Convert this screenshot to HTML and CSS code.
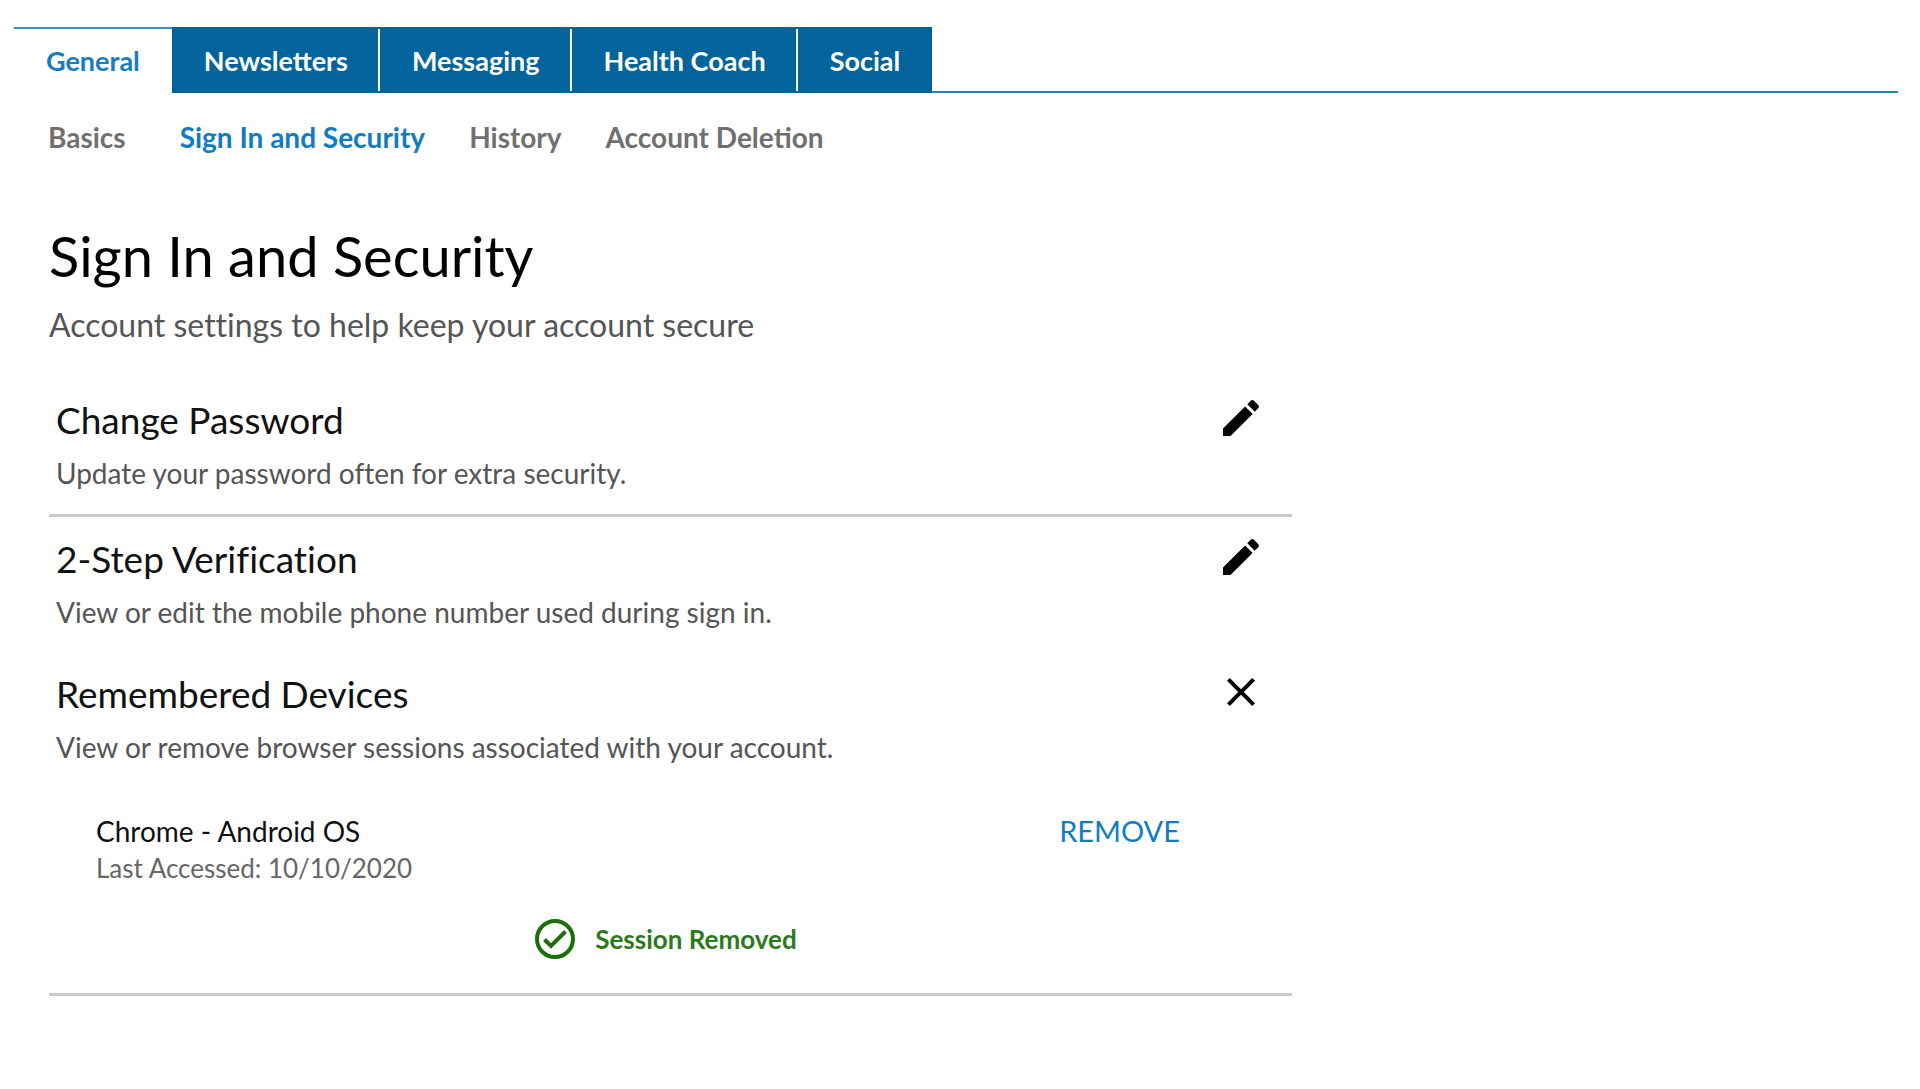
FILE: index.html
```html
<!DOCTYPE html>
<html lang="en">
<head>
<meta charset="utf-8">
<meta name="viewport" content="width=device-width, initial-scale=1">
<title>Sign In and Security</title>
<link rel="stylesheet" href="styles.css">
</head>
<body>
<nav class="tabs" aria-label="Account sections">
  <a class="tab tab-active" href="#general" aria-current="page">General</a>
  <a class="tab" href="#newsletters">Newsletters</a>
  <a class="tab" href="#messaging">Messaging</a>
  <a class="tab" href="#coach">Health Coach</a>
  <a class="tab" href="#social">Social</a>
  <span class="tabs-rest"></span>
</nav>
<nav class="subnav" aria-label="General settings">
  <a class="sublink sublink-first" href="#basics">Basics</a>
  <a class="sublink sublink-active" href="#security" aria-current="page">Sign In and Security</a>
  <a class="sublink" href="#history">History</a>
  <a class="sublink" href="#deletion">Account Deletion</a>
</nav>
<main class="content">
  <h1 class="title">Sign In and Security</h1>
  <p class="subtitle">Account settings to help keep your account secure</p>

  <section class="group">
    <div class="setting">
      <div class="setting-text">
        <h2 class="setting-title">Change Password</h2>
        <p class="setting-desc">Update your password often for extra security.</p>
      </div>
      <button class="icon-button" type="button" aria-label="Edit password">
        <svg class="icon" viewBox="0 0 24 24"><path d="M3 17.25V21h3.75L17.81 9.94l-3.75-3.75L3 17.25zM20.71 7.04a1 1 0 0 0 0-1.41l-2.34-2.34a1 1 0 0 0-1.41 0l-1.83 1.83 3.75 3.75 1.83-1.83z"/></svg>
      </button>
    </div>
  </section>

  <section class="group">
    <div class="setting">
      <div class="setting-text">
        <h2 class="setting-title">2-Step Verification</h2>
        <p class="setting-desc">View or edit the mobile phone number used during sign in.</p>
      </div>
      <button class="icon-button" type="button" aria-label="Edit 2-step verification">
        <svg class="icon" viewBox="0 0 24 24"><path d="M3 17.25V21h3.75L17.81 9.94l-3.75-3.75L3 17.25zM20.71 7.04a1 1 0 0 0 0-1.41l-2.34-2.34a1 1 0 0 0-1.41 0l-1.83 1.83 3.75 3.75 1.83-1.83z"/></svg>
      </button>
    </div>
    <div class="setting">
      <div class="setting-text">
        <h2 class="setting-title">Remembered Devices</h2>
        <p class="setting-desc">View or remove browser sessions associated with your account.</p>
      </div>
      <button class="icon-button" type="button" aria-label="Close remembered devices">
        <svg class="icon" viewBox="0 0 24 24"><path d="M19 6.41L17.59 5 12 10.59 6.41 5 5 6.41 10.59 12 5 17.59 6.41 19 12 13.41 17.59 19 19 17.59 13.41 12z"/></svg>
      </button>
    </div>
    <div class="device">
      <div class="device-text">
        <h3 class="device-name">Chrome - Android OS</h3>
        <p class="device-date">Last Accessed: 10/10/2020</p>
      </div>
      <button class="remove" type="button">REMOVE</button>
    </div>
    <p class="status" role="status">
      <svg class="status-icon" viewBox="0 0 40 40"><circle cx="20" cy="20" r="18"/><path d="M9.500 20.500L16 27 30.500 12.500"/></svg>
      Session Removed
    </p>
  </section>
</main>
</body>
</html>
```
FILE: styles.css
```css
* {
  box-sizing: border-box;
}

body {
  margin: 0;
  padding: 27px 22px 40px 14px;
  background: #fff;
  color: #111;
  font-family: Lato, "Open Sans", sans-serif;
}

h1, h2, h3, p {
  margin: 0;
  font-weight: 400;
}

button {
  padding: 0;
  border: 0;
  background: none;
  font-family: inherit;
  cursor: pointer;
}

a {
  text-decoration: none;
}

.tabs {
  display: flex;
}

.tab {
  padding: 2px 32px 0;
  border: solid #02649a;
  border-width: 2px 0;
  background: #02649a;
  color: #fff;
  font-size: 27px;
  font-weight: 700;
  line-height: 60px;
  white-space: nowrap;
}

/* white rule between neighbouring filled tabs */
.tab + .tab {
  background: linear-gradient(#fff, #fff) right / 2px 100% no-repeat padding-box, #02649a;
}

.tab:nth-last-child(2) {
  background: #02649a;
}

.tab-active {
  border-color: #3d8cbb transparent transparent;
  background: #fff;
  color: #177dc2;
}

.tabs-rest {
  flex: 1;
  border-bottom: 2px solid #2a80b3;
}

.subnav {
  display: flex;
  gap: 44px;
  padding: 28px 34px 0;
}

.sublink {
  color: #707070;
  font-size: 28px;
  font-weight: 700;
  line-height: 32px;
  white-space: nowrap;
}

.sublink-first {
  margin-right: 10px;
}

.sublink-active {
  color: #0f7cc4;
}

.content {
  max-width: 1278px;
  padding: 71px 0 0 35px;
  font-variant-ligatures: none;
}

.title {
  color: #000;
  font-size: 56px;
  line-height: 64px;
}

.subtitle {
  margin-top: 17px;
  color: #555;
  font-size: 32px;
  line-height: 40px;
}

.group {
  padding: 20px 0 23px 7px;
  border-bottom: 3px solid #cacaca;
}

.subtitle + .group {
  margin-top: 33px;
}

.setting {
  display: flex;
  justify-content: space-between;
}

.setting + .setting {
  margin-top: 42px;
}

.setting-title {
  font-size: 37px;
  line-height: 44px;
}

.setting-desc {
  margin-top: 13px;
  color: #555;
  font-size: 28px;
  line-height: 36px;
}

.icon-button {
  width: 48px;
  height: 48px;
  margin: -4px 27px 0 0;
}

.icon {
  display: block;
  width: 48px;
  height: 48px;
}

.device {
  display: flex;
  align-items: flex-start;
  justify-content: space-between;
  padding: 48px 112px 0 40px;
}

.device-name {
  font-size: 28px;
  line-height: 36px;
}

.device-date {
  margin-top: 3px;
  color: #666;
  font-size: 26px;
  line-height: 32px;
}

.remove {
  color: #0f7cc4;
  font-size: 29px;
  line-height: 36px;
}

.status {
  display: flex;
  align-items: center;
  justify-content: center;
  gap: 20px;
  padding: 35px 16px 11px 0;
  color: #2c7a1c;
  font-size: 26px;
  font-weight: 700;
  line-height: 40px;
}

.status-icon {
  width: 40px;
  height: 40px;
  fill: none;
  stroke: #1c6e0a;
  stroke-width: 4;
}
```
